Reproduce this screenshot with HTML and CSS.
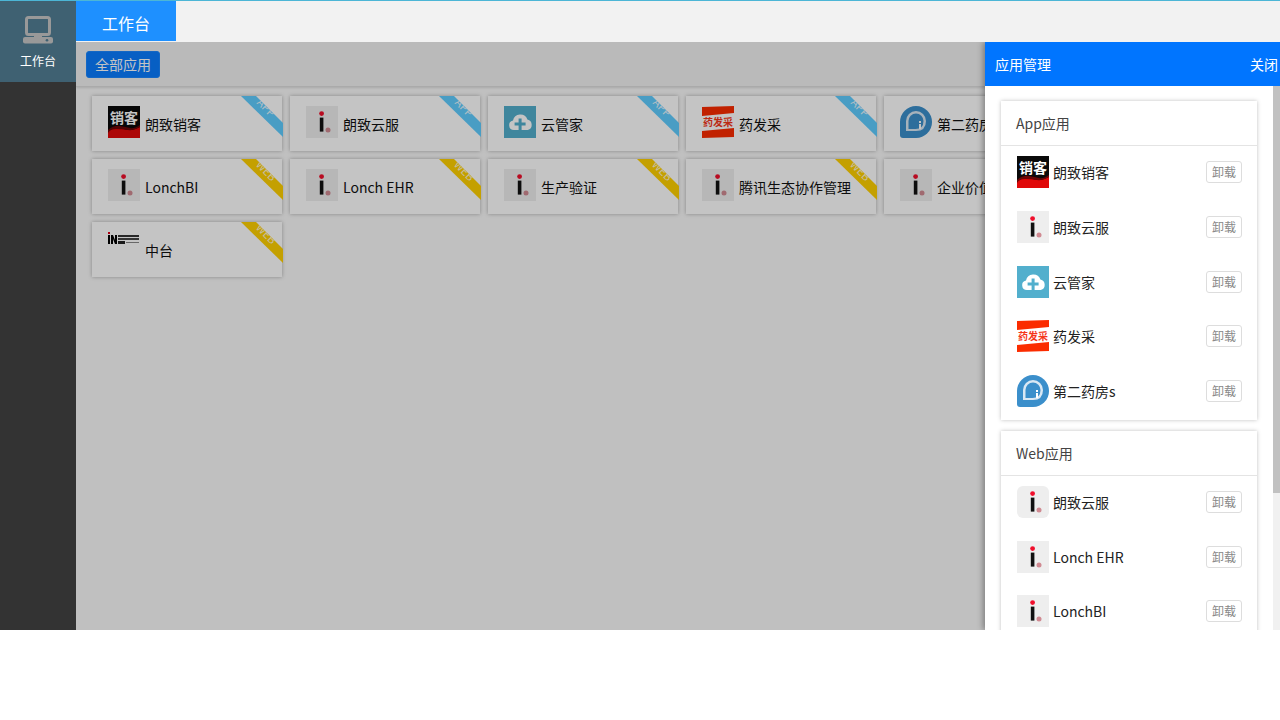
FILE: index.html
```html
<!DOCTYPE html>
<html lang="zh-CN">
<head>
<meta charset="utf-8">
<title>工作台</title>
<link rel="stylesheet" href="styles.css">
</head>
<body>
<svg class="sprite" aria-hidden="true">
  <symbol id="i-xiaoke" viewBox="0 0 32 32">
    <rect width="32" height="32" fill="#0a0a0a"/>
    <path d="M0 26Q6 20 12 22T22 24T32 21V32H0Z" fill="#e00808"/>
    <path d="M0 24Q6 19 12 20T22 22T32 19V21Q26 25 20 24T8 23T0 27Z" fill="#6b0505"/>
    <text x="16" y="17" class="svg-xk">销客</text>
  </symbol>
  <symbol id="i-lonch" viewBox="0 0 32 32">
    <rect width="32" height="32" fill="#eeeeee"/>
    <circle cx="15.6" cy="7.6" r="2.4" fill="#f00f2c"/>
    <rect x="13.8" y="11.6" width="3.6" height="14" fill="#111"/>
    <circle cx="22" cy="24" r="2.5" fill="#d08a92"/>
  </symbol>
  <symbol id="i-lonch-round" viewBox="0 0 32 32">
    <rect width="32" height="32" rx="6" fill="#eeeeee"/>
    <circle cx="15.6" cy="7.6" r="2.4" fill="#f00f2c"/>
    <rect x="13.8" y="11.6" width="3.6" height="14" fill="#111"/>
    <circle cx="22" cy="24" r="2.5" fill="#d08a92"/>
  </symbol>
  <symbol id="i-cloud" viewBox="0 0 32 32">
    <rect width="32" height="32" fill="#52afcd"/>
    <path d="M10 24a4.8 4.8 0 0 1-1-9.5a7.5 7.5 0 0 1 14.4-1a5.4 5.4 0 0 1 .3 10.5Z" fill="#fff"/>
    <path d="M14.6 12.5h3v4h4v3h-4v4.500h-3v-4.500h-4v-3h4Z" fill="#52afcd"/>
  </symbol>
  <symbol id="i-yaofa" viewBox="0 0 32 32">
    <path d="M0 1L32 0V7L0 10Z" fill="#fb2c00"/>
    <path d="M0 25L32 22V31L0 32Z" fill="#fb2c00"/>
    <text x="16" y="20" class="svg-yf">药发采</text>
  </symbol>
  <symbol id="i-pharm" viewBox="0 0 32 32">
    <path d="M16 0a16 16 0 1 1 0 32H3a3 3 0 0 1-3-3V16A16 16 0 0 1 16 0Z" fill="#3b8fcb"/>
    <path d="M6 25V15a10 10 0 0 1 20 0q0 10-10 10Z" fill="#d9e8f4"/>
    <path d="M8.500 23V15a7.500 7.500 0 0 1 15 0q0 8-8 8Z" fill="#3b8fcb"/>
    <rect x="19" y="18" width="2" height="5" fill="#fff"/>
    <rect x="19" y="15" width="2" height="2" fill="#fff"/>
  </symbol>
  <symbol id="i-influence" viewBox="0 0 32 32">
    <rect x="0" y="0" width="2" height="2" fill="#e00018"/>
    <rect x="0" y="3" width="2" height="9" fill="#000"/>
    <path d="M3 3h2l2 5V3h2v9H7L5 7v5H3Z" fill="#000"/>
    <rect x="10" y="3" width="21" height="2" fill="#333"/>
    <rect x="10" y="6" width="21" height="2" fill="#444"/>
    <rect x="10" y="9" width="7" height="3" fill="#222"/>
    <rect x="18" y="10" width="13" height="1" fill="#888"/>
  </symbol>
</svg>

<div class="app">
  <aside class="sidebar">
    <div class="nav-item">
      <svg class="nav-icon" viewBox="0 0 32 30">
        <rect x="4.500" y="1.500" width="23" height="17" rx="2" fill="none" stroke="#999" stroke-width="3"/>
        <rect x="12" y="18" width="8" height="3" fill="#999"/>
        <rect x="1" y="21" width="30" height="6.500" rx="2" fill="#999"/>
        <circle cx="25" cy="24.300" r="1.300" fill="#3f6172"/>
      </svg>
      <span class="nav-label">工作台</span>
    </div>
  </aside>
  <div class="main">
    <div class="topbar">
      <div class="tab">工作台</div>
    </div>
    <div class="stage">
      <div class="toolbar">
        <button class="filter-btn">全部应用</button>
      </div>
      <div class="card-grid">
        <div class="card"><svg class="card-icon"><use href="#i-xiaoke"/></svg><span class="card-name">朗致销客</span><div class="ribbon ribbon-app"><span class="ribbon-text">APP</span></div></div>
        <div class="card"><svg class="card-icon"><use href="#i-lonch"/></svg><span class="card-name">朗致云服</span><div class="ribbon ribbon-app"><span class="ribbon-text">APP</span></div></div>
        <div class="card"><svg class="card-icon"><use href="#i-cloud"/></svg><span class="card-name">云管家</span><div class="ribbon ribbon-app"><span class="ribbon-text">APP</span></div></div>
        <div class="card"><svg class="card-icon"><use href="#i-yaofa"/></svg><span class="card-name">药发采</span><div class="ribbon ribbon-app"><span class="ribbon-text">APP</span></div></div>
        <div class="card"><svg class="card-icon"><use href="#i-pharm"/></svg><span class="card-name">第二药房s</span><div class="ribbon ribbon-app"><span class="ribbon-text">APP</span></div></div>
        <div class="card"><svg class="card-icon"><use href="#i-lonch"/></svg><span class="card-name">LonchBI</span><div class="ribbon ribbon-web"><span class="ribbon-text">WEB</span></div></div>
        <div class="card"><svg class="card-icon"><use href="#i-lonch"/></svg><span class="card-name">Lonch EHR</span><div class="ribbon ribbon-web"><span class="ribbon-text">WEB</span></div></div>
        <div class="card"><svg class="card-icon"><use href="#i-lonch"/></svg><span class="card-name">生产验证</span><div class="ribbon ribbon-web"><span class="ribbon-text">WEB</span></div></div>
        <div class="card"><svg class="card-icon"><use href="#i-lonch"/></svg><span class="card-name">腾讯生态协作管理</span><div class="ribbon ribbon-web"><span class="ribbon-text">WEB</span></div></div>
        <div class="card"><svg class="card-icon"><use href="#i-lonch"/></svg><span class="card-name">企业价值管理</span><div class="ribbon ribbon-web"><span class="ribbon-text">WEB</span></div></div>
        <div class="card"><svg class="card-icon"><use href="#i-influence"/></svg><span class="card-name">中台</span><div class="ribbon ribbon-web"><span class="ribbon-text">WEB</span></div></div>
      </div>
      <div class="overlay"></div>
      <section class="drawer">
        <header class="drawer-head">
          <span>应用管理</span>
          <span class="drawer-close">关闭</span>
        </header>
        <div class="drawer-body">
          <div class="drawer-content">
            <div class="panel">
              <div class="panel-title">App应用</div>
              <div class="row"><svg class="row-icon"><use href="#i-xiaoke"/></svg><span class="row-name">朗致销客</span><button class="remove-btn">卸载</button></div>
              <div class="row"><svg class="row-icon"><use href="#i-lonch"/></svg><span class="row-name">朗致云服</span><button class="remove-btn">卸载</button></div>
              <div class="row"><svg class="row-icon"><use href="#i-cloud"/></svg><span class="row-name">云管家</span><button class="remove-btn">卸载</button></div>
              <div class="row"><svg class="row-icon"><use href="#i-yaofa"/></svg><span class="row-name">药发采</span><button class="remove-btn">卸载</button></div>
              <div class="row"><svg class="row-icon"><use href="#i-pharm"/></svg><span class="row-name">第二药房s</span><button class="remove-btn">卸载</button></div>
            </div>
            <div class="panel">
              <div class="panel-title">Web应用</div>
              <div class="row"><svg class="row-icon"><use href="#i-lonch-round"/></svg><span class="row-name">朗致云服</span><button class="remove-btn">卸载</button></div>
              <div class="row"><svg class="row-icon"><use href="#i-lonch"/></svg><span class="row-name">Lonch EHR</span><button class="remove-btn">卸载</button></div>
              <div class="row"><svg class="row-icon"><use href="#i-lonch"/></svg><span class="row-name">LonchBI</span><button class="remove-btn">卸载</button></div>
            </div>
          </div>
          <div class="scroll-track"><div class="scroll-thumb"></div></div>
        </div>
      </section>
    </div>
  </div>
</div>
</body>
</html>
```

FILE: styles.css
```css
* { box-sizing: border-box; }
html, body { margin: 0; padding: 0; background: #fff; }
body {
  font-family: "Noto Sans CJK SC", "Liberation Sans", sans-serif;
  font-size: 14px;
  color: #111;
  overflow: hidden;
}
button { font-family: inherit; }
.sprite { width: 0; height: 0; position: absolute; }

.app {
  display: flex;
  height: 630px;
  border-top: 1px solid #4cb6d6;
  overflow: hidden;
}

.sidebar { width: 76px; flex: none; background: #333; }
.nav-item {
  height: 81px;
  background: #3f6172;
  display: flex;
  flex-direction: column;
  align-items: center;
  padding-top: 15px;
}
.nav-icon { width: 32px; height: 30px; display: block; }
.nav-label { color: #fff; font-size: 12px; line-height: 16px; margin-top: 7px; }

.main { flex: 1; min-width: 0; display: flex; flex-direction: column; }
.topbar { height: 41px; flex: none; background: #f2f2f2; display: flex; }
.tab {
  width: 100px;
  height: 40px;
  background: #1e90ff;
  color: #fff;
  font-size: 16px;
  line-height: 44px;
  text-align: center;
}

.stage { position: relative; flex: 1; min-height: 0; background: #fafafa; overflow: hidden; }
.toolbar {
  height: 45px;
  padding: 9px 10px;
  background: #f2f2f2;
  border-bottom: 1px solid #ddd;
  box-shadow: 0 1px 2px rgba(0,0,0,.12);
}
.filter-btn {
  display: block;
  width: 74px;
  height: 27px;
  padding: 0;
  border: 1px solid #1a86ff;
  border-radius: 3px;
  background: #0a7cff;
  color: #fff;
  font-size: 14px;
  line-height: 25px;
}

.card-grid {
  display: grid;
  grid-template-columns: repeat(5, 190px);
  grid-auto-rows: 55px;
  gap: 8px;
  padding: 9px 16px;
}
.card {
  position: relative;
  display: flex;
  align-items: center;
  background: #fff;
  box-shadow: 0 0 4px rgba(0,0,0,.3);
  padding-left: 16px;
}
.card-icon {
  position: absolute;
  left: 16px;
  top: 10px;
  width: 32px;
  height: 32px;
}
.card-name { margin-left: 37px; line-height: 20px; color: #111; white-space: nowrap; }

.ribbon {
  position: absolute;
  top: 0;
  right: -1px;
  width: 42px;
  height: 42px;
  clip-path: polygon(0 0, 15px 0, 42px 27px, 42px 41px);
}
.ribbon-app { background: #60cdff; }
.ribbon-web { background: #ffd000; }
.ribbon-text {
  position: absolute;
  left: 12px;
  top: 4px;
  width: 28px;
  text-align: center;
  font-size: 11px;
  line-height: 14px;
  color: rgba(255,255,255,.85);
  transform: rotate(45deg);
}

.overlay { position: absolute; inset: 0; background: rgba(0,0,0,.23); }

.drawer {
  position: absolute;
  top: 0;
  right: 0;
  bottom: 0;
  width: 295px;
  display: flex;
  flex-direction: column;
  background: #fff;
  box-shadow: -2px 0 6px rgba(0,0,0,.35);
}
.drawer-head {
  height: 44px;
  flex: none;
  background: #0075ff;
  color: #fff;
  display: flex;
  justify-content: space-between;
  align-items: center;
  padding: 0 2px 0 10px;
}
.drawer-body { flex: 1; min-height: 0; display: flex; }
.drawer-content { flex: 1; min-width: 0; padding: 15px 16px; overflow: hidden; }
.scroll-track { width: 7px; flex: none; background: #f1f1f1; }
.scroll-thumb { height: 407px; background: #c1c1c1; }

.panel {
  background: #fff;
  box-shadow: 0 0 4px rgba(0,0,0,.25);
  margin-bottom: 11px;
}
.panel-title {
  height: 45px;
  padding-left: 15px;
  line-height: 44px;
  color: #444;
  border-bottom: 1px solid #e4e4e4;
}
.row {
  height: 54.75px;
  display: flex;
  align-items: center;
  padding: 10px 15px 12.75px 16px;
}
.row-icon { width: 32px; height: 32px; flex: none; }
.row-name { flex: 1; margin-left: 4px; color: #222; white-space: nowrap; }
.remove-btn {
  width: 36px;
  height: 22px;
  padding: 0;
  border: 1px solid #ddd;
  border-radius: 3px;
  background: #fff;
  color: #888;
  font-size: 12px;
  line-height: 20px;
}

.svg-xk { font-size: 14px; font-weight: 700; fill: #fff; text-anchor: middle; }
.svg-yf { font-size: 10px; font-weight: 700; fill: #f5361a; text-anchor: middle; }
```
